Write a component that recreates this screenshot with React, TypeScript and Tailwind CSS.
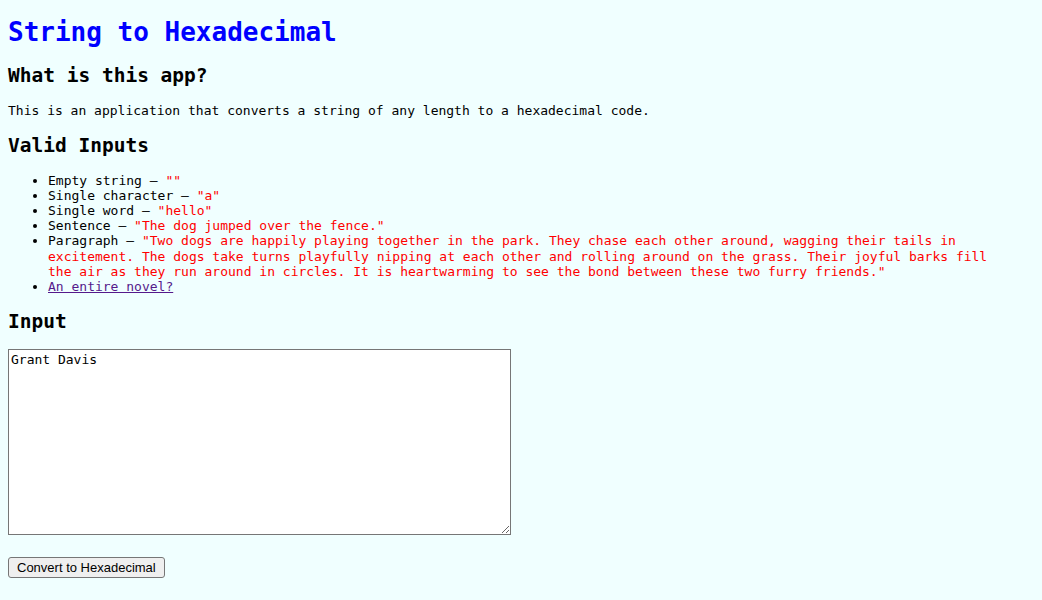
import { useState } from 'react';

const mono = "font-['DejaVu_Sans_Mono','Liberation_Mono',monospace]";

export default function App() {
  const [text, setText] = useState('Grant Davis');

  return (
    <div className={`min-h-[600px] bg-[#f0ffff] px-2 pt-[17px] pb-2 text-[13px] leading-[15.1px] text-black ${mono}`}>
      <h1 className="m-0 text-[26px] leading-[30px] font-bold text-[#0000ff]">
        String to Hexadecimal
      </h1>

      <h2 className="mt-[17px] mb-0 text-[19.5px] leading-[23px] font-bold">What is this app?</h2>
      <p className="mt-4 mb-0">
        This is an application that converts a string of any length to a hexadecimal code.
      </p>

      <h2 className="mt-4 mb-0 text-[19.5px] leading-[23px] font-bold">Valid Inputs</h2>
      <ul className="mt-4 mb-0 list-disc pl-10 pr-[40px]">
        <li>
          Empty string – <span className="text-[#ff0000]">""</span>
        </li>
        <li>
          Single character – <span className="text-[#ff0000]">"a"</span>
        </li>
        <li>
          Single word – <span className="text-[#ff0000]">"hello"</span>
        </li>
        <li>
          Sentence – <span className="text-[#ff0000]">"The dog jumped over the fence."</span>
        </li>
        <li className="max-w-[960px]">
          Paragraph –{' '}
          <span className="text-[#ff0000]">
            "Two dogs are happily playing together in the park. They chase each other around, wagging their tails in
            excitement. The dogs take turns playfully nipping at each other and rolling around on the grass. Their
            joyful barks fill the air as they run around in circles. It is heartwarming to see the bond between these
            two furry friends."
          </span>
        </li>
        <li>
          <a href="#" className="text-[#551a8b] underline">
            An entire novel?
          </a>
        </li>
      </ul>

      <h2 className="mt-4 mb-0 text-[19.5px] leading-[23px] font-bold">Input</h2>
      <div className="mt-4 flex flex-col items-start gap-[22px]">
        <textarea
          value={text}
          onChange={(e) => setText(e.target.value)}
          className={`block h-[186px] w-[503px] border border-[#767676] bg-white p-[2px] text-[13px] leading-[15px] text-black ${mono}`}
        />
        <button
          type="button"
          className="h-[21px] rounded-[3px] border border-[#767676] bg-[#efefef] px-[8px] font-['Liberation_Sans',Arial,sans-serif] text-[13px] leading-[19px] text-black"
        >
          Convert to Hexadecimal
        </button>
      </div>
    </div>
  );
}
